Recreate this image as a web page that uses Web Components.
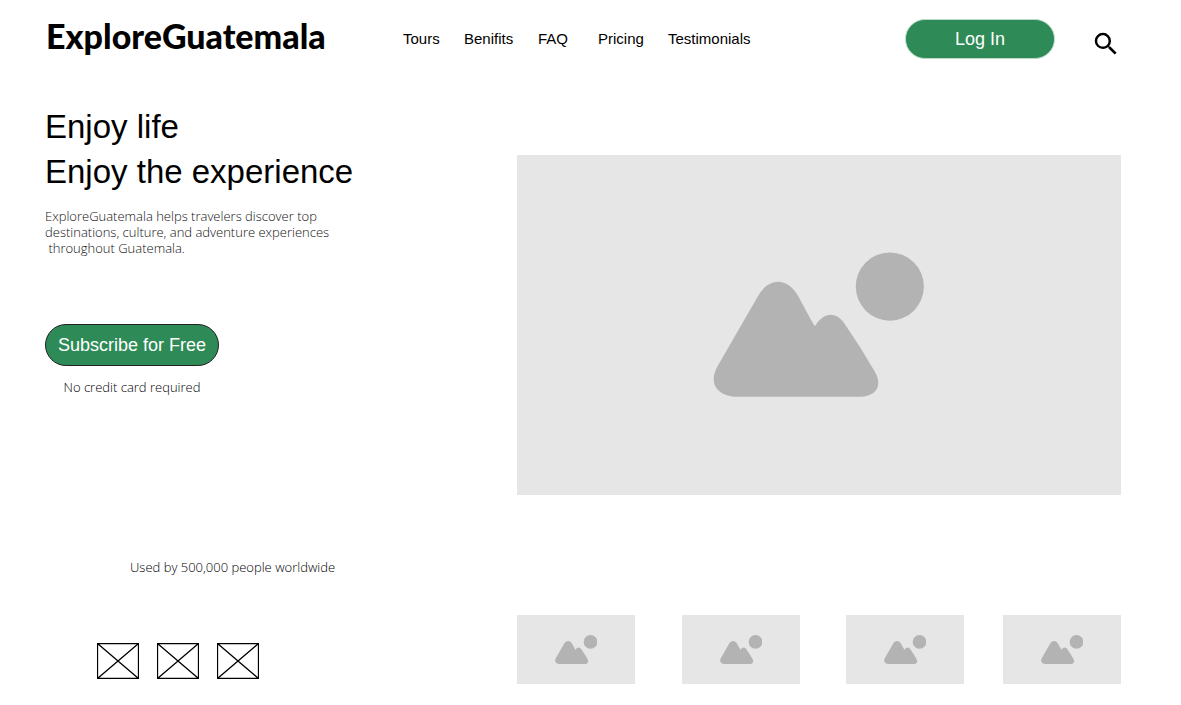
<!DOCTYPE html>
<html lang="en">
<head>
<meta charset="utf-8">
<meta name="viewport" content="width=device-width, initial-scale=1">
<title>ExploreGuatemala</title>
<style>
  body { margin: 0; background: #fff; color: #000; font-family: "Liberation Sans", Arial, sans-serif; }
</style>
</head>
<body>
<explore-page></explore-page>

<template id="t-page">
  <style>
    :host { display: block; padding: 19px 60px 20px 45px; }
    main { display: grid; grid-template-columns: 472fr 604fr; }
    .visual { padding-top: 96px; }
    .thumbs { display: grid; grid-template-columns: 165fr 164fr 157fr 118fr; padding-top: 120px; }
    .thumbs image-placeholder { width: 118px; --ratio: 118 / 69; --icon: 36%; }
  </style>
  <site-header></site-header>
  <main>
    <hero-copy></hero-copy>
    <div class="visual"><image-placeholder></image-placeholder></div>
    <social-proof>Used by 500,000 people worldwide</social-proof>
    <div class="thumbs">
      <image-placeholder></image-placeholder>
      <image-placeholder></image-placeholder>
      <image-placeholder></image-placeholder>
      <image-placeholder></image-placeholder>
    </div>
  </main>
</template>

<template id="t-header">
  <style>
    :host { display: block; }
    header { display: flex; align-items: center; height: 40px; }
    .logo { box-sizing: border-box; width: 358px; flex: none; padding: 0 0 6px 1px; font: 900 34px/34px Lato, sans-serif; color: #000; text-decoration: none; }
    nav { display: grid; grid-template-columns: 61px 74px 60px 70px auto; font-size: 15px; line-height: 20px; }
    nav a { color: #000; text-decoration: none; }
    .actions { margin-left: auto; display: flex; align-items: flex-end; gap: 36px; }
    pill-button { --w: 150px; --h: 40px; --edge: #b9dac8; }
    .search { display: block; width: 30px; height: 30px; padding: 0; border: 0; background: none; cursor: pointer; }
    svg { display: block; width: 30px; height: 30px; }
  </style>
  <header>
    <a class="logo" href="#">ExploreGuatemala</a>
    <nav aria-label="Main">
      <a href="#tours">Tours</a>
      <a href="#benefits">Benifits</a>
      <a href="#faq">FAQ</a>
      <a href="#pricing">Pricing</a>
      <a href="#testimonials">Testimonials</a>
    </nav>
    <div class="actions">
      <pill-button>Log In</pill-button>
      <button class="search" type="button" aria-label="Search">
        <svg viewBox="0 0 24 24" aria-hidden="true"><path d="M15.500 14h-.79l-.28-.27A6.471 6.471 0 0 0 16 9.500 6.500 6.500 0 1 0 9.500 16c1.610 0 3.090-.59 4.230-1.570l.27.28v.79l5 4.990L20.490 19l-4.990-5zm-6 0C7.010 14 5 11.990 5 9.500S7.010 5 9.500 5 14 7.010 14 9.500 11.990 14 9.500 14z"/></svg>
      </button>
    </div>
  </header>
</template>

<template id="t-pill">
  <style>
    :host { display: inline-block; }
    button { display: block; box-sizing: border-box; width: var(--w); height: var(--h); padding: 0; border: 1px solid var(--edge);
      border-radius: 21px; background: #2e8b57; color: #fff; font: 18px/20px "Liberation Sans", Arial, sans-serif; cursor: pointer; }
  </style>
  <button type="button"><slot></slot></button>
</template>

<template id="t-hero">
  <style>
    :host { display: block; padding-top: 45px; }
    h1 { margin: 0; font-size: 33px; line-height: 45px; font-weight: 400; }
    p { margin: 0; font: 300 13px/17px "Open Sans", sans-serif; }
    .lead { margin-top: 14px; color: #111; line-height: 16px; }
    .cta { display: inline-flex; flex-direction: column; align-items: center; margin-top: 68px; gap: 13px; }
    .note { color: #000; }
    pill-button { --w: 174px; --h: 42px; --edge: #222; }
  </style>
  <h1>Enjoy life<br>Enjoy the experience</h1>
  <p class="lead">ExploreGuatemala helps travelers discover top<br>destinations, culture, and adventure experiences<br>&nbsp;throughout Guatemala.</p>
  <div class="cta">
    <pill-button>Subscribe for Free</pill-button>
    <p class="note">No credit card required</p>
  </div>
</template>

<template id="t-proof">
  <style>
    :host { display: block; padding-top: 64px; }
    p { margin: 0; padding-left: 85px; color: #000; font: 300 13px/17px "Open Sans", sans-serif; }
    .logos { display: flex; gap: 18px; margin-top: 67px; padding-left: 52px; }
    svg { display: block; width: 42px; height: 36px; fill: none; stroke: #000; stroke-width: 1.3; }
  </style>
  <p><slot></slot></p>
  <div class="logos">
    <svg viewBox="0 0 42 36" aria-hidden="true"><path d="M.5.5h41v35H.5zL41.500 35.500M41.500.5L.5 35.500"/></svg>
    <svg viewBox="0 0 42 36" aria-hidden="true"><path d="M.5.5h41v35H.5zL41.500 35.500M41.500.5L.5 35.500"/></svg>
    <svg viewBox="0 0 42 36" aria-hidden="true"><path d="M.5.5h41v35H.5zL41.500 35.500M41.500.5L.5 35.500"/></svg>
  </div>
</template>

<template id="t-image">
  <style>
    :host { display: flex; align-items: center; justify-content: center; min-height: 0; aspect-ratio: var(--ratio, 604 / 340); background: #e6e6e6; }
    svg { display: block; flex: none; width: var(--icon, 35%); fill: #b3b3b3; }
  </style>
  <svg viewBox="0 0 211 145" aria-hidden="true">
    <circle cx="176.500" cy="34.500" r="34"/>
    <path d="M45 44C56 25 74 25 85 44L93 59Q97 67 101.700 74C111 60 122 59 131 71Q147 94 161 118.500C170 133 163 144 147.500 144.500H25C4 144.500-5 131 4.500 114Z"/>
  </svg>
</template>

<script>
  const define = (name, id) => customElements.define(name, class extends HTMLElement {
    constructor() {
      super();
      this.attachShadow({ mode: "open" }).append(document.getElementById(id).content.cloneNode(true));
    }
  });
  define("image-placeholder", "t-image");
  define("pill-button", "t-pill");
  define("social-proof", "t-proof");
  define("hero-copy", "t-hero");
  define("site-header", "t-header");
  define("explore-page", "t-page");
</script>
</body>
</html>
